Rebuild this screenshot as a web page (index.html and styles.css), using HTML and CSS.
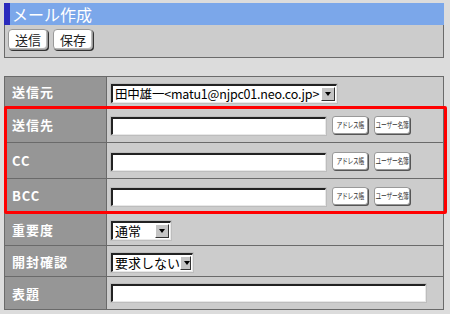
FILE: index.html
```html
<!DOCTYPE html>
<html lang="ja">
<head>
  <meta charset="UTF-8" />
  <link rel="stylesheet" href="styles.css">
</head>
<body>
  <div class="page">
    <div class="title">メール作成</div>
    <div class="toolbar">
      <button class="btn">送信</button>
      <button class="btn">保存</button>
    </div>

    <div class="form-wrap">
      <table class="form">
        <tr class="r-from">
          <th>送信元</th>
          <td>
            <div class="select sel-from"><span class="sel-text">田中雄一&lt;matu1@njpc01.neo.co.jp&gt;</span><span class="sel-arrow"></span></div>
          </td>
        </tr>
        <tr class="r-addr">
          <th>送信先</th>
          <td>
            <div class="addr">
              <span class="input in-addr"></span>
              <button class="mini"><span>アドレス帳</span></button>
              <button class="mini"><span>ユーザー名簿</span></button>
            </div>
          </td>
        </tr>
        <tr class="r-addr">
          <th>CC</th>
          <td>
            <div class="addr">
              <span class="input in-addr"></span>
              <button class="mini"><span>アドレス帳</span></button>
              <button class="mini"><span>ユーザー名簿</span></button>
            </div>
          </td>
        </tr>
        <tr class="r-bcc">
          <th>BCC</th>
          <td>
            <div class="addr">
              <span class="input in-addr"></span>
              <button class="mini"><span>アドレス帳</span></button>
              <button class="mini"><span>ユーザー名簿</span></button>
            </div>
          </td>
        </tr>
        <tr class="r-prio">
          <th>重要度</th>
          <td>
            <div class="select sel-prio"><span class="sel-text">通常</span><span class="sel-arrow"></span></div>
          </td>
        </tr>
        <tr class="r-read">
          <th>開封確認</th>
          <td>
            <div class="select sel-read"><span class="sel-text">要求しない</span><span class="sel-arrow"></span></div>
          </td>
        </tr>
        <tr class="r-subj">
          <th>表題</th>
          <td><span class="input in-subj"></span></td>
        </tr>
      </table>
      <!-- highlight around the address rows -->
      <div class="highlight"></div>
    </div>
  </div>
</body>
</html>
```

FILE: styles.css
```css
html, body {
  margin: 0;
  padding: 0;
  background: #dcdcdc;
  font-family: "Noto Sans CJK JP", "Liberation Sans", sans-serif;
  overflow: hidden;
}

.page {
  width: 440px;
  padding: 3px 0 0 4px;
}

.title {
  height: 22px;
  line-height: 22px;
  background: #7ba7ea;
  border-left: 6px solid #2b2bbd;
  color: #fff;
  font-size: 16px;
  padding-left: 2px;
}

.toolbar {
  height: 32px;
  background: #cccccc;
  border: 1px solid #6a6a6a;
  border-top: none;
  box-sizing: content-box;
  display: flex;
  align-items: center;
  gap: 5px;
  padding-left: 3px;
}

.btn {
  font-family: inherit;
  font-size: 13px;
  width: 40px;
  height: 21px;
  padding: 0;
  line-height: 17px;
  margin-top: -4px;
  background: #fff;
  color: #222;
  border: 1px solid #999;
  border-radius: 4px;
  box-shadow: 1px 1px 0 #333, inset -1px -1px 0 #bbb;
}

.form-wrap {
  position: relative;
  margin-top: 18px;
}

.form {
  width: 440px;
  border-collapse: collapse;
  border: 1px solid #6a6a6a;
}

.form th, .form td {
  border: 1px solid #6a6a6a;
  padding: 0;
}

.form th {
  width: 94px;
  background: #969696;
  color: #fff;
  font-size: 13px;
  font-weight: bold;
  text-align: left;
  padding-left: 7px;
  letter-spacing: 1px;
}

.form td {
  background: #cccccc;
  padding-left: 4px;
}

.r-from { height: 30px; }
.r-addr { height: 36px; }
.r-bcc { height: 34px; }
.r-prio { height: 33px; }
.r-read { height: 31px; }
.r-subj { height: 33px; }

.input {
  display: block;
  height: 15px;
  background: #fff;
  border-top: 2px solid #222;
  border-left: 2px solid #222;
  border-bottom: 1px solid #e8e8e8;
  border-right: 1px solid #e8e8e8;
  box-shadow: 0 0 0 1px #bdbdbd;
}

.in-addr { width: 212px; margin-top: 3px; }
.in-subj { width: 312px; }

.addr {
  display: flex;
  align-items: center;
  gap: 5px;
}

.mini {
  font-family: inherit;
  font-size: 8px;
  width: 36px;
  height: 18px;
  padding: 0;
  margin-left: 1px;
  background: #fff;
  color: #333;
  border: 1px solid #999;
  border-radius: 3px;
  box-shadow: 1px 1px 0 #555;
  display: flex;
  align-items: center;
  justify-content: center;
  white-space: nowrap;
}

.mini span {
  display: inline-block;
  transform: scaleX(0.72);
  letter-spacing: -0.3px;
}

.select {
  display: inline-flex;
  align-items: center;
  height: 16px;
  background: #fff;
  border-top: 2px solid #222;
  border-left: 2px solid #222;
  border-bottom: 1px solid #e8e8e8;
  border-right: 1px solid #e8e8e8;
  box-shadow: 0 0 0 1px #bdbdbd;
  font-size: 13px;
  color: #000;
}

.sel-text {
  padding-left: 2px;
  flex: 1;
  line-height: 16px;
  white-space: nowrap;
}

.sel-from { width: 223px; }
.sel-from .sel-text { font-size: 12.5px; letter-spacing: -0.2px; }
.sel-prio { width: 57px; }
.sel-read { width: 79px; }

.sel-arrow {
  width: 14px;
  height: 14px;
  background: #c4c4c4;
  border: 1px solid #333;
  border-top-color: #fff;
  border-left-color: #fff;
  box-sizing: border-box;
  position: relative;
  margin-right: 1px;
}

.sel-arrow::after {
  content: "";
  position: absolute;
  left: 3px;
  top: 4px;
  border-left: 3px solid transparent;
  border-right: 3px solid transparent;
  border-top: 4px solid #000;
}

.highlight {
  position: absolute;
  left: 0;
  top: 30px;
  width: 437px;
  height: 102px;
  border: 3px solid #ff0000;
  border-radius: 2px;
}
```
